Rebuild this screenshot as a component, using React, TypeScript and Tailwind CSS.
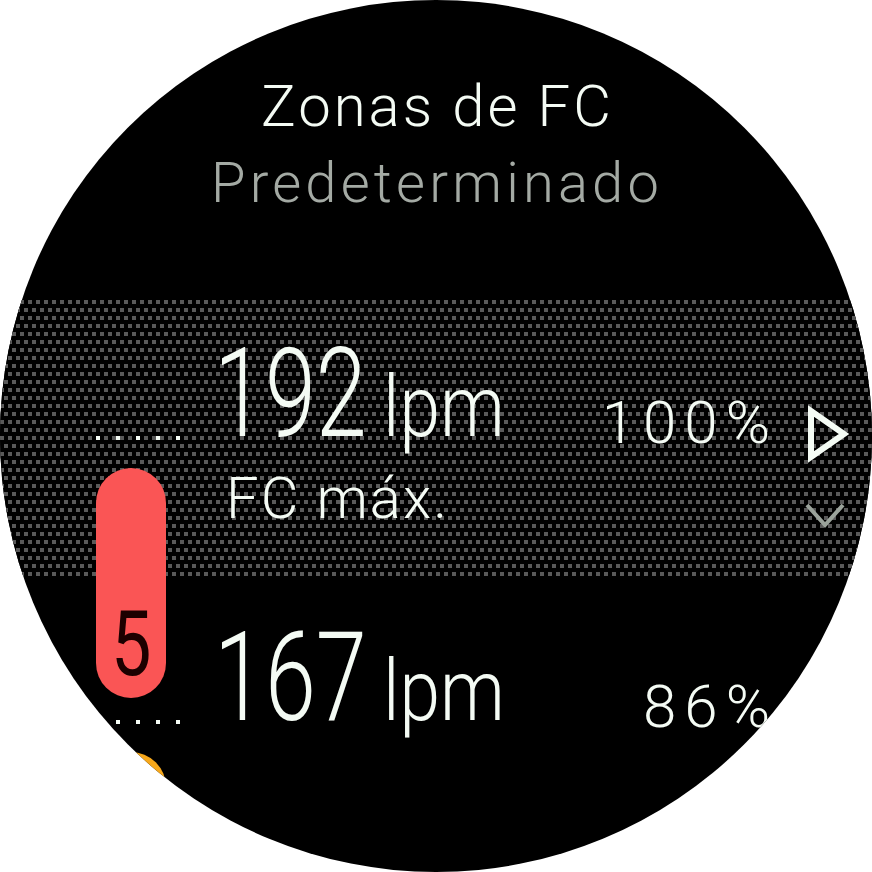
export default function App() {
  return (
    <div className="w-[872px] h-[872px] bg-white font-['Roboto',sans-serif] font-light">
      <div className="relative w-full h-full rounded-full bg-black overflow-hidden flex flex-col">
        {/* Header */}
        <div className="pt-[77px] flex flex-col items-center">
          <div className="text-[58px] leading-none tracking-[3px] pl-[3px] text-[#f4fbf4]">Zonas de FC</div>
          <div className="mt-[20px] text-[56px] leading-none tracking-[4.2px] pl-[2px] text-[#a4aaa4]">Predeterminado</div>
        </div>

        {/* Zone list */}
        <div className="relative mt-[89px] flex-1">
          <div className="absolute inset-x-0 top-0 h-[276px] bg-black bg-[image:conic-gradient(at_4px_4px,transparent_270deg,#595959_0),conic-gradient(at_4px_4px,transparent_270deg,#595959_0)] bg-[length:8px_16px] bg-[position:4px_0,0_8px]" />

          <div className="relative flex">
            {/* Zone indicator */}
            <div className="w-[208px] pl-[96px] flex flex-col">
              <Dots className="mt-[136px]" />
              <div className="mt-[28px] w-[70px] h-[230px] rounded-full bg-[#fa5555] flex flex-col justify-end items-center pb-[8px]">
                <span className="inline-block text-[90px] leading-none scale-x-[0.8] text-[#1c0000] font-normal">5</span>
              </div>
              <Dots className="mt-[22px]" />
              <div className="mt-[28px] w-[70px] h-[230px] rounded-full bg-[#f7a81b]" />
            </div>

            {/* Values */}
            <div className="w-[560px] flex flex-col">
              <Row value="192" percent="100%" />
              <div className="mt-[13px] pl-[18px] text-[58px] leading-none tracking-[2px] text-[#f4fbf4]">FC máx.</div>
              <div className="mt-[57px]">
                <Row value="167" percent="86%" />
              </div>
            </div>

            {/* Controls */}
            <div className="w-[104px] flex flex-col">
              <svg className="mt-[104px] ml-[38px]" width="44" height="60" viewBox="0 0 44 60">
                <polygon points="5,7 38,30 5,53" fill="none" stroke="#f4fbf4" strokeWidth="6" strokeLinejoin="miter" />
              </svg>
              <svg className="mt-[36px] ml-[36px]" width="44" height="32" viewBox="0 0 44 32">
                <polyline points="3,5 21,25 39,5" fill="none" stroke="#9ba39b" strokeWidth="4" />
              </svg>
            </div>
          </div>
        </div>
      </div>
    </div>
  );
}

function Dots({ className }: { className: string }) {
  return (
    <div className={`flex gap-4 ${className}`}>
      {[0, 1, 2, 3, 4].map((i) => (
        <div key={i} className="w-1 h-1 bg-[#f4fbf4]" />
      ))}
    </div>
  );
}

function Row({ value, percent }: { value: string; percent: string }) {
  return (
    <div className="h-[156px] flex items-end text-[#f4fbf4]">
      <div className="w-[175px] pl-[6px]">
        <span className="inline-block origin-left scale-x-[0.74] text-[124px] leading-none">{value}</span>
      </div>
      <div className="mb-[6px] w-[130px]">
        <span className="inline-block origin-left scale-x-[0.85] text-[86px] leading-none">lpm</span>
      </div>
      <div className="flex-1" />
      <div className="mb-[3px] -mr-[10px] text-[60px] leading-none tracking-[8px]">{percent}</div>
    </div>
  );
}
